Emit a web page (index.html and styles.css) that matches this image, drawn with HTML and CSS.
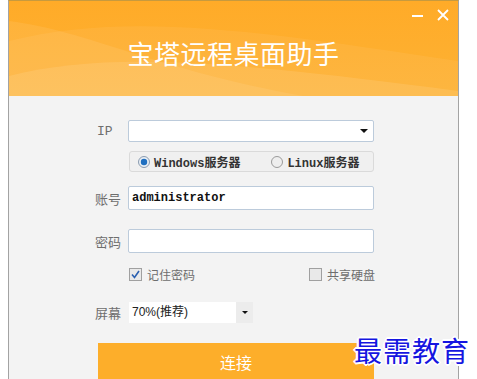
FILE: index.html
```html
<!DOCTYPE html>
<html lang="zh-CN">
<head>
  <meta charset="UTF-8">
  <title>宝塔远程桌面助手</title>
  <link rel="stylesheet" href="styles.css">
</head>
<body>
  <div class="window">
    <div class="header">
      <svg class="waves" width="449" height="96" viewBox="0 0 449 96">
        <path d="M0 40 C120 10 250 30 449 60 L449 96 L0 96 Z" fill="#ffffff" fill-opacity="0.06"/>
        <path d="M0 75 C100 50 220 60 449 90 L449 96 L0 96 Z" fill="#ffffff" fill-opacity="0.1"/>
        <path d="M0 20 C80 30 150 70 300 96 L0 96 Z" fill="#ffffff" fill-opacity="0.08"/>
      </svg>
      <div class="win-controls">
        <span class="win-min"></span>
        <svg class="win-close" width="12" height="12" viewBox="0 0 12 12">
          <path d="M1 1 L11 11 M11 1 L1 11" stroke="#fff" stroke-width="1.8"/>
        </svg>
      </div>
      <h1 class="title">宝塔远程桌面助手</h1>
    </div>

    <div class="form">
      <div class="row">
        <label class="lbl lbl-ip">IP</label>
        <div class="field combo">
          <span class="combo-arrow"></span>
        </div>
      </div>

      <div class="row row-radio">
        <div class="radio-box">
          <span class="radio-item">
            <svg width="12" height="12" viewBox="0 0 12 12">
              <circle cx="6" cy="6" r="5.5" fill="#e8eef4" stroke="#8a9bb0"/>
              <circle cx="6" cy="6" r="3.2" fill="#1f6fc0"/>
            </svg>
            <span class="radio-text">Windows服务器</span>
          </span>
          <span class="radio-item">
            <svg width="12" height="12" viewBox="0 0 12 12">
              <circle cx="6" cy="6" r="5.5" fill="#eeeeee" stroke="#9a9a9a"/>
            </svg>
            <span class="radio-text">Linux服务器</span>
          </span>
        </div>
      </div>

      <div class="row row-account">
        <label class="lbl">账号</label>
        <div class="field input">administrator</div>
      </div>

      <div class="row row-password">
        <label class="lbl">密码</label>
        <div class="field input"></div>
      </div>

      <div class="row row-check">
        <span class="check-item">
          <svg width="13" height="13" viewBox="0 0 13 13">
            <rect x="0.5" y="0.5" width="12" height="12" fill="#e9e9e9" stroke="#a0a0a0"/>
            <path d="M3 6.5 L5.5 9.5 L10 3" fill="none" stroke="#2a5fb0" stroke-width="1.6"/>
          </svg>
          记住密码
        </span>
        <span class="check-item">
          <svg width="13" height="13" viewBox="0 0 13 13">
            <rect x="0.5" y="0.5" width="12" height="12" fill="#e9e9e9" stroke="#a0a0a0"/>
          </svg>
          共享硬盘
        </span>
      </div>

      <div class="row row-screen">
        <label class="lbl">屏幕</label>
        <div class="select">
          <span class="select-text">70%(推荐)</span>
          <span class="select-btn"><span class="combo-arrow"></span></span>
        </div>
      </div>

      <button class="connect-btn">连接</button>
    </div>
  </div>

  <div class="watermark">最需教育</div>
</body>
</html>
```

FILE: styles.css
```css
body {
  margin: 0;
  padding: 0;
  background-color: #ffffff;
  font-family: "Liberation Sans", "Noto Sans CJK SC", sans-serif;
  overflow: hidden;
}
.window {
  margin-left: 8px;
  width: 449px;
  height: 378px;
  overflow: hidden;
  border-left: 1px solid #a3a3a3;
  border-right: 1px solid #a3a3a3;
  border-top: 1px solid #c79a3e;
  background-color: #f3f3f3;
  box-sizing: content-box;
}
.header {
  position: relative;
  height: 95px;
  background: linear-gradient(180deg, #ffab28 0%, #fdb234 100%);
  display: flex;
  flex-direction: column;
  align-items: center;
  overflow: hidden;
}
.waves {
  position: absolute;
  left: 0;
  top: 0;
}
.win-controls {
  position: relative;
  align-self: flex-end;
  display: flex;
  align-items: center;
  gap: 14px;
  margin-top: 8px;
  margin-right: 9px;
  height: 12px;
}
.win-min {
  display: block;
  width: 11px;
  height: 2px;
  background: #ffffff;
  margin-top: 1px;
}
.win-close {
  display: block;
}
.title {
  position: relative;
  margin: 17px 0 0 0;
  font-family: "Noto Sans CJK SC", sans-serif;
  font-weight: normal;
  font-size: 26px;
  line-height: 30px;
  color: #ffffff;
  letter-spacing: 0.5px;
}
.form {
  padding: 24px 0 0 86px;
  display: flex;
  flex-direction: column;
}
.row {
  display: flex;
  align-items: center;
}
.lbl {
  width: 33px;
  font-family: "Noto Sans CJK SC", sans-serif;
  font-size: 13px;
  color: #6e6e6e;
}
.lbl-ip {
  font-family: "Liberation Mono", monospace;
  padding-left: 2px;
  width: 31px;
}
.field {
  box-sizing: border-box;
  width: 246px;
  background: #ffffff;
  border: 1px solid #bccbdb;
  border-radius: 2px;
}
.combo {
  height: 22px;
  position: relative;
}
.combo-arrow {
  position: absolute;
  right: 5px;
  top: 8px;
  width: 0;
  height: 0;
  border-left: 4px solid transparent;
  border-right: 4px solid transparent;
  border-top: 4px solid #111111;
}
.row-radio {
  margin-top: 9px;
  padding-left: 34px;
}
.radio-box {
  box-sizing: border-box;
  width: 245px;
  height: 21px;
  border: 1px solid #dadada;
  border-radius: 3px;
  background: #f0f0f0;
  display: flex;
  align-items: center;
  padding-left: 8px;
  gap: 31px;
}
.radio-item {
  display: flex;
  align-items: center;
  gap: 4px;
}
.radio-text {
  font-family: "Liberation Mono", "Noto Sans CJK SC", monospace;
  font-size: 12px;
  font-weight: bold;
  color: #333333;
}
.row-account {
  margin-top: 14px;
}
.input {
  height: 24px;
  padding-left: 3px;
  font-family: "Liberation Mono", monospace;
  font-size: 12px;
  font-weight: bold;
  line-height: 22px;
  color: #111111;
}
.row-password {
  margin-top: 19px;
}
.row-check {
  margin-top: 14px;
  padding-left: 34px;
  width: 246px;
  justify-content: space-between;
  height: 14px;
}
.check-item {
  display: flex;
  align-items: center;
  gap: 5px;
  font-family: "Noto Sans CJK SC", sans-serif;
  font-size: 12px;
  color: #6e6e6e;
}
.row-screen {
  margin-top: 21px;
}
.select {
  display: flex;
  width: 124px;
  height: 21px;
  background: #ffffff;
  margin-left: 1px;
}
.select-text {
  flex: 1;
  padding-left: 3px;
  font-family: "Liberation Sans", "Noto Sans CJK SC", sans-serif;
  font-size: 12px;
  line-height: 21px;
  color: #222222;
}
.select-btn {
  position: relative;
  width: 17px;
  background: #ececec;
}
.select-btn .combo-arrow {
  right: 5px;
  top: 9px;
  border-left-width: 3px;
  border-right-width: 3px;
  border-top-width: 3px;
}
.connect-btn {
  margin-top: 20px;
  margin-left: 3px;
  width: 276px;
  height: 40px;
  border: none;
  background-color: #fdae2a;
  color: #ffffff;
  font-family: "Noto Sans CJK SC", sans-serif;
  font-size: 16px;
  padding-bottom: 4px;
}
.watermark {
  position: absolute;
  left: 354px;
  top: 330px;
  font-family: "Noto Sans CJK SC", sans-serif;
  font-size: 28px;
  letter-spacing: 1px;
  color: #1515e0;
  text-shadow: 1px 1px 0 #fff, -1px -1px 0 #fff, 1px -1px 0 #fff, -1px 1px 0 #fff, 2px 0 0 #fff, -2px 0 0 #fff, 0 2px 0 #fff, 0 -2px 0 #fff;
}
```
